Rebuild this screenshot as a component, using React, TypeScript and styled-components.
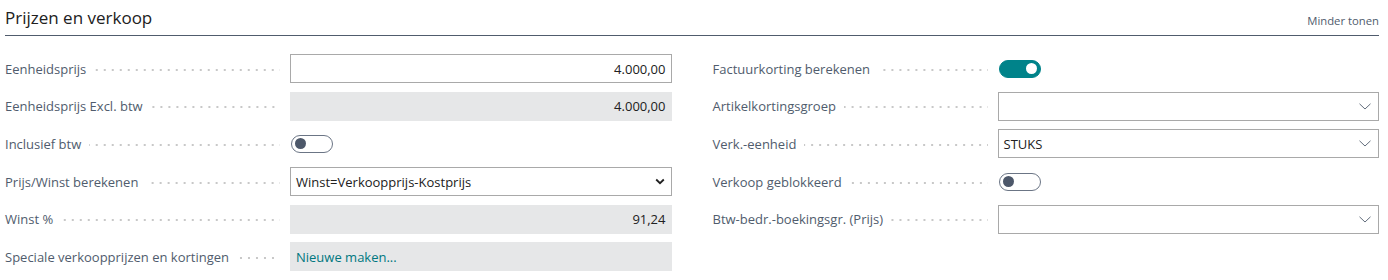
import React from "react"
import styled, { createGlobalStyle } from "styled-components"

const GlobalStyle = createGlobalStyle`
  body {
    margin: 0;
    background: #fff;
    font-family: "Open Sans", "Noto Sans", sans-serif;
  }
`

const Page = styled.section`
  padding: 0 9px 0 5px;
`

const Header = styled.header`
  display: flex;
  align-items: flex-end;
  justify-content: space-between;
  height: 36px;
  border-bottom: 1px solid #505c6d;
  box-sizing: border-box;
  padding-bottom: 6px;
`

const Title = styled.h2`
  margin: 0;
  font-size: 17px;
  font-weight: 400;
  color: #212121;
  line-height: 22px;
`

const ToggleLink = styled.span`
  font-size: 11.3px;
  color: #505c6d;
  line-height: 14px;
  margin-bottom: 1px;
`

const Columns = styled.div`
  display: grid;
  grid-template-columns: 1fr 1fr;
  column-gap: 41px;
  padding-top: 18px;
`

const Column = styled.div`
  display: flex;
  flex-direction: column;
  gap: 8.7px;
`

const Row = styled.div`
  display: grid;
  grid-template-columns: 285px 1fr;
  height: 29px;
  align-items: center;
`

const LabelCell = styled.div`
  display: flex;
  align-items: center;
  margin-right: 10px;
  min-width: 0;
`

const Label = styled.span`
  font-size: 13px;
  color: #505c6d;
  white-space: nowrap;
`

const Leader = styled.span`
  flex: 1;
  height: 2px;
  margin: 2px 0 0 8px;
  background-image: linear-gradient(to right, #c8c8c8 2px, transparent 2px);
  background-size: 8px 2px;
  background-repeat: repeat-x;
  background-position: right center;
`

const Field = styled.div<{ $readonly?: boolean; $align?: "left" | "right" }>`
  height: 29px;
  box-sizing: border-box;
  display: flex;
  align-items: center;
  justify-content: ${(p) => (p.$align === "right" ? "flex-end" : "space-between")};
  padding: 0 5px;
  font-size: 13px;
  color: #212121;
  background: ${(p) => (p.$readonly ? "#e6e7e8" : "#fff")};
  border: 1px solid ${(p) => (p.$readonly ? "#e6e7e8" : "#a9a9a9")};
`

const LinkText = styled.span`
  color: #00777f;
`

const Chevron = styled.svg<{ $bold?: boolean }>`
  flex: none;
  margin-right: ${(p) => (p.$bold ? "1px" : "2px")};
`

const Switch = styled.span<{ $on?: boolean }>`
  display: flex;
  align-items: center;
  justify-content: ${(p) => (p.$on ? "flex-end" : "flex-start")};
  width: 42px;
  height: 18px;
  box-sizing: border-box;
  border-radius: 9px;
  padding: 0 3px;
  margin-left: 1px;
  background: ${(p) => (p.$on ? "#00838a" : "#fff")};
  border: 1px solid ${(p) => (p.$on ? "#00838a" : "#6b7585")};
`

const Knob = styled.span<{ $on?: boolean }>`
  width: 11px;
  height: 11px;
  border-radius: 50%;
  background: ${(p) => (p.$on ? "#fff" : "#4d586a")};
`

type Item =
  | { label: string; kind: "number"; value: string; readonly?: boolean }
  | { label: string; kind: "toggle"; on?: boolean }
  | { label: string; kind: "select"; value: string; bold?: boolean }
  | { label: string; kind: "link"; value: string }

const left: Item[] = [
  { label: "Eenheidsprijs", kind: "number", value: "4.000,00" },
  { label: "Eenheidsprijs Excl. btw", kind: "number", value: "4.000,00", readonly: true },
  { label: "Inclusief btw", kind: "toggle" },
  { label: "Prijs/Winst berekenen", kind: "select", value: "Winst=Verkoopprijs-Kostprijs", bold: true },
  { label: "Winst %", kind: "number", value: "91,24", readonly: true },
  { label: "Speciale verkoopprijzen en kortingen", kind: "link", value: "Nieuwe maken..." },
]

const right: Item[] = [
  { label: "Factuurkorting berekenen", kind: "toggle", on: true },
  { label: "Artikelkortingsgroep", kind: "select", value: "" },
  { label: "Verk.-eenheid", kind: "select", value: "STUKS" },
  { label: "Verkoop geblokkeerd", kind: "toggle" },
  { label: "Btw-bedr.-boekingsgr. (Prijs)", kind: "select", value: "" },
]

const Control = ({ item }: { item: Item }) => {
  if (item.kind === "toggle") {
    return (
      <div>
        <Switch $on={item.on}>
          <Knob $on={item.on} />
        </Switch>
      </div>
    )
  }
  if (item.kind === "select") {
    return (
      <Field>
        <span>{item.value}</span>
        {item.bold ? (
          <Chevron $bold width="10" height="7" viewBox="0 0 10 7">
            <path d="M1.2 1.5 L5 5.2 L8.8 1.5" fill="none" stroke="#212121" strokeWidth="1.8" />
          </Chevron>
        ) : (
          <Chevron width="12" height="7" viewBox="0 0 12 7">
            <path d="M0.5 0.8 L6 6 L11.5 0.8" fill="none" stroke="#505c6d" strokeWidth="0.9" />
          </Chevron>
        )}
      </Field>
    )
  }
  if (item.kind === "link") {
    return (
      <Field $readonly>
        <LinkText>{item.value}</LinkText>
      </Field>
    )
  }
  return (
    <Field $readonly={item.readonly} $align="right">
      {item.value}
    </Field>
  )
}

const FieldColumn = ({ items }: { items: Item[] }) => (
  <Column>
    {items.map((item) => (
      <Row key={item.label}>
        <LabelCell>
          <Label>{item.label}</Label>
          <Leader />
        </LabelCell>
        <Control item={item} />
      </Row>
    ))}
  </Column>
)

export default function App() {
  return (
    <>
      <GlobalStyle />
      <Page>
        <Header>
          <Title>Prijzen en verkoop</Title>
          <ToggleLink>Minder tonen</ToggleLink>
        </Header>
        <Columns>
          <FieldColumn items={left} />
          <FieldColumn items={right} />
        </Columns>
      </Page>
    </>
  )
}
